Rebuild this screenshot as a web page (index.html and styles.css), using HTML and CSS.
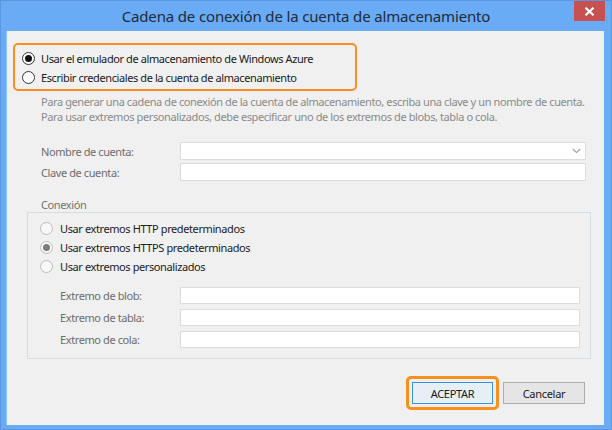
FILE: index.html
```html
<!DOCTYPE html>
<html lang="es">
<head>
<meta charset="utf-8">
<title>Cadena de conexión de la cuenta de almacenamiento</title>
<link rel="stylesheet" href="styles.css">
</head>
<body>
<div class="window">
  <div class="titlebar">
    <div class="title">Cadena de conexión de la cuenta de almacenamiento</div>
    <div class="close"><svg width="11" height="9" viewBox="0 0 11 9"><path d="M1.5 0.8 L9.5 8.2 M9.5 0.8 L1.5 8.2" stroke="#fff" stroke-width="2.2" fill="none"/></svg></div>
  </div>
  <div class="client">
    <div class="mode-box">
      <label class="radio-row"><span class="radio checked"></span><span>Usar el emulador de almacenamiento de Windows Azure</span></label>
      <label class="radio-row"><span class="radio"></span><span>Escribir credenciales de la cuenta de almacenamiento</span></label>
    </div>
    <p class="desc">Para generar una cadena de conexión de la cuenta de almacenamiento, escriba una clave y un nombre de cuenta.<br>Para usar extremos personalizados, debe especificar uno de los extremos de blobs, tabla o cola.</p>
    <div class="form">
      <div class="field-row">
        <span class="label">Nombre de cuenta:</span>
        <div class="input select"><svg class="chev" width="9" height="6" viewBox="0 0 9 6"><path d="M0.8 1 L4.5 4.6 L8.2 1" stroke="#9a9a9a" stroke-width="1.1" fill="none"/></svg></div>
      </div>
      <div class="field-row">
        <span class="label">Clave de cuenta:</span>
        <div class="input"></div>
      </div>
    </div>
    <div class="group-title">Conexión</div>
    <div class="group">
      <label class="radio-row dim"><span class="radio"></span><span>Usar extremos HTTP predeterminados</span></label>
      <label class="radio-row dim"><span class="radio checked"></span><span>Usar extremos HTTPS predeterminados</span></label>
      <label class="radio-row dim"><span class="radio"></span><span>Usar extremos personalizados</span></label>
      <div class="endpoints">
        <div class="ep-row"><span class="ep-label">Extremo de blob:</span><div class="input"></div></div>
        <div class="ep-row"><span class="ep-label">Extremo de tabla:</span><div class="input"></div></div>
        <div class="ep-row"><span class="ep-label">Extremo de cola:</span><div class="input"></div></div>
      </div>
    </div>
    <div class="buttons">
      <span class="highlight"><button class="btn default">ACEPTAR</button></span>
      <button class="btn">Cancelar</button>
    </div>
  </div>
</div>
</body>
</html>
```
FILE: styles.css
```css
* { box-sizing: border-box; }
html, body { margin: 0; padding: 0; }
body {
  width: 612px;
  height: 430px;
  overflow: hidden;
  font-family: "Noto Sans", "Liberation Sans", sans-serif;
  font-size: 11px;
  letter-spacing: -0.4px;
  color: #1a1a1a;
}
.window {
  width: 612px;
  height: 430px;
  background: #6aabf5;
  border: 1px solid #5b96e0;
  display: flex;
  flex-direction: column;
}
.titlebar {
  position: relative;
  height: 30px;
  flex: none;
  display: flex;
  align-items: center;
  justify-content: center;
}
.title {
  font-size: 15px;
  letter-spacing: -0.15px;
  color: #1f2a3a;
  margin-top: -1px;
}
.close {
  position: absolute;
  top: 0;
  right: 6px;
  width: 31px;
  height: 20px;
  background: #c75050;
  display: flex;
  align-items: center;
  justify-content: center;
}
.client {
  flex: 1;
  margin: 0 7px 4px 6px;
  background: #f0f0f0;
  display: flex;
  flex-direction: column;
  box-shadow: -1px 0 0 #8cc3fa;
}
.mode-box {
  margin: 12px 0 0 6px;
  width: 344px;
  height: 48px;
  border: 2px solid #f7901e;
  border-radius: 5px;
  padding: 4px 0 0 7px;
}
.radio-row {
  display: flex;
  align-items: center;
  height: 19px;
  gap: 6px;
  white-space: nowrap;
}
.radio {
  width: 13px;
  height: 13px;
  border-radius: 50%;
  border: 1px solid #333;
  background: #fff;
  display: flex;
  align-items: center;
  justify-content: center;
  flex: none;
}
.radio.checked::after {
  content: "";
  width: 7px;
  height: 7px;
  border-radius: 50%;
  background: #111;
}
.dim .radio {
  border-color: #bcbcbc;
  background: #f8f8f8;
}
.dim .radio.checked::after {
  background: #7c7c7c;
}
.dim { color: #222; }
.desc {
  margin: 3px 0 0 34px;
  line-height: 15px;
  color: #8a8a8a;
  white-space: nowrap;
}
.form {
  margin: 18px 18px 0 34px;
  display: flex;
  flex-direction: column;
  gap: 3px;
}
.field-row {
  display: flex;
  align-items: center;
  height: 18px;
}
.label {
  width: 139px;
  flex: none;
  color: #6d6d6d;
}
.input {
  flex: 1;
  height: 100%;
  background: #fff;
  border: 1px solid #dcdcdc;
}
.select {
  display: flex;
  align-items: center;
  justify-content: flex-end;
  padding-right: 4px;
}
.group-title {
  margin: 16px 0 0 34px;
  line-height: 15px;
  color: #727272;
}
.group {
  margin: 0 13px 0 20px;
  height: 147px;
  border: 1px solid #d6dde2;
  padding: 6px 10px 0 12px;
}
.group .radio-row { gap: 7px; }
.endpoints {
  margin: 11px 0 0 20px;
  display: flex;
  flex-direction: column;
  gap: 5px;
}
.ep-row {
  display: flex;
  align-items: center;
  height: 17px;
}
.ep-label {
  width: 120px;
  flex: none;
  color: #6d6d6d;
}
.buttons {
  margin-top: 17px;
  padding-right: 19px;
  display: flex;
  justify-content: flex-end;
  align-items: center;
  gap: 4px;
}
.highlight {
  display: flex;
  border: 3px solid #f7901e;
  border-radius: 5px;
  padding: 3px;
}
.btn {
  font-family: "Noto Sans", "Liberation Sans", sans-serif;
  font-size: 11px;
  letter-spacing: -0.3px;
  color: #1a1a1a;
  height: 22px;
  width: 82px;
  background: #e5e5e5;
  border: 1px solid #adadad;
  padding: 0;
  margin: 0;
}
.btn.default {
  width: 81px;
  border-color: #3c8ee0;
  background: #e6eef6;
  box-shadow: inset 0 0 0 1px #e8f2fb;
}
```
